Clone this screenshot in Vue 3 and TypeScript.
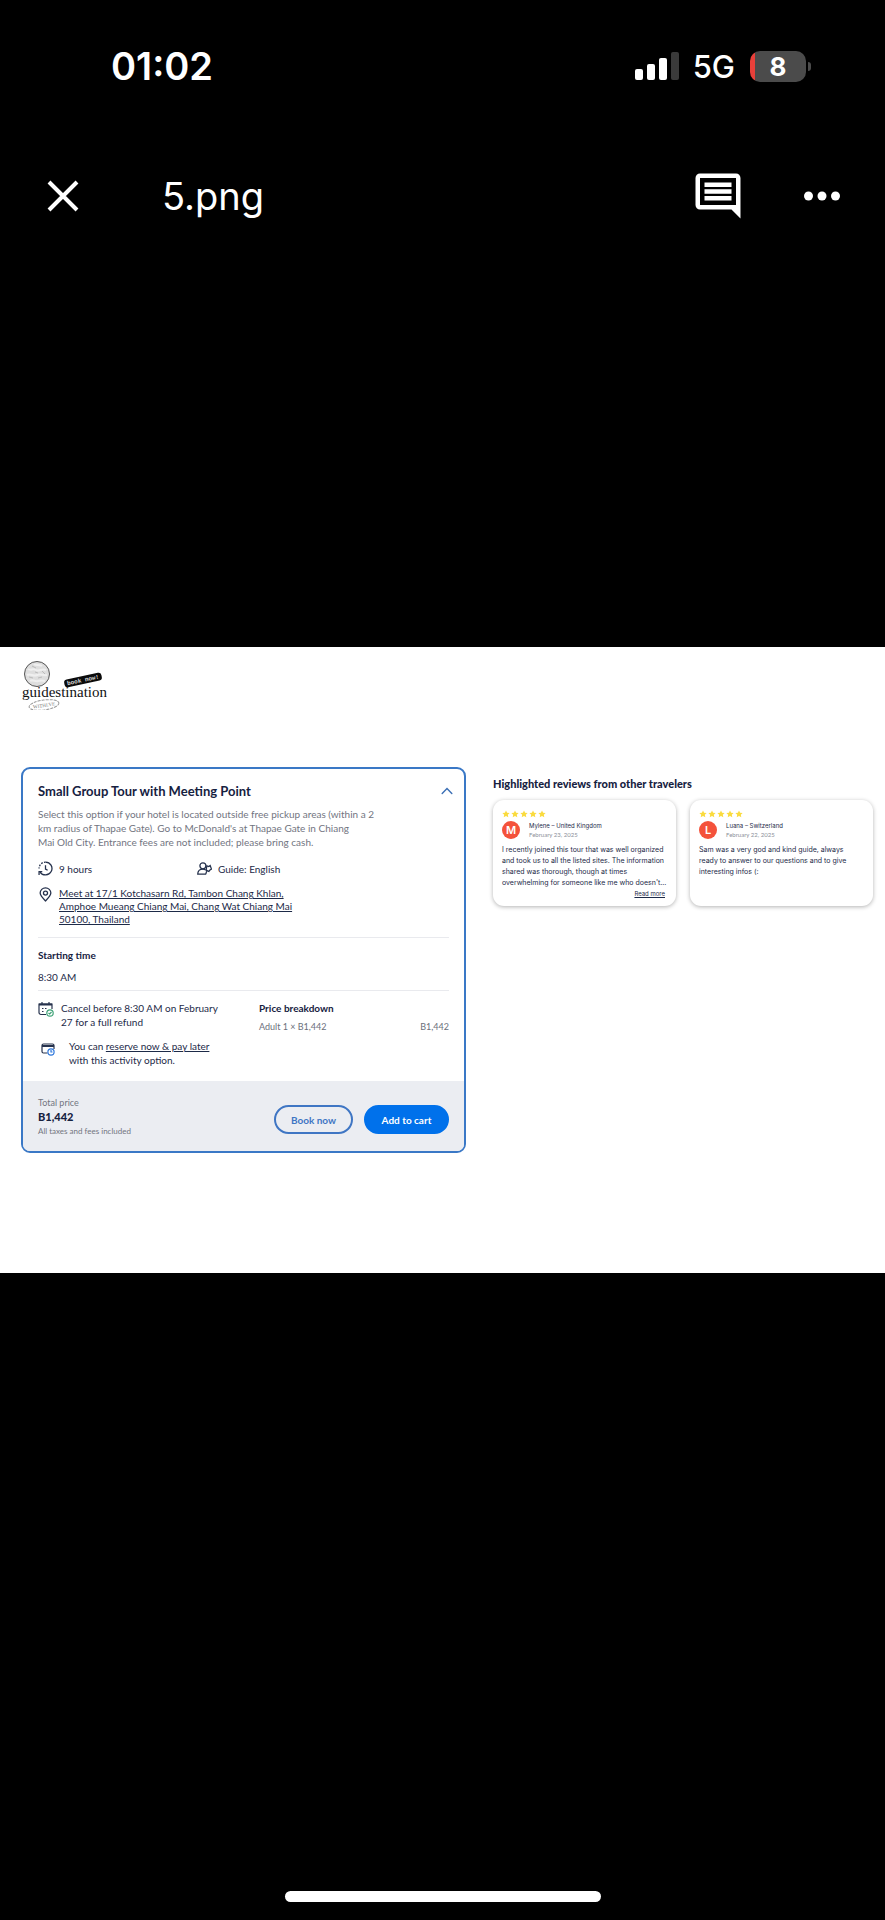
<script setup lang="ts">
interface Review {
  initial: string
  author: string
  date: string
  lines: string[]
  more: boolean
}

const reviews: Review[] = [
  {
    initial: 'M',
    author: 'Mylene – United Kingdom',
    date: 'February 23, 2025',
    lines: [
      'I recently joined this tour that was well organized',
      'and took us to all the listed sites. The information',
      'shared was thorough, though at times',
      "overwhelming for someone like me who doesn't...",
    ],
    more: true,
  },
  {
    initial: 'L',
    author: 'Luana – Switzerland',
    date: 'February 22, 2025',
    lines: [
      'Sam was a very god and kind guide, always',
      'ready to answer to our questions and to give',
      'interesting infos (:',
    ],
    more: false,
  },
]

const description: string[] = [
  'Select this option if your hotel is located outside free pickup areas (within a 2',
  "km radius of Thapae Gate). Go to McDonald's at Thapae Gate in Chiang",
  'Mai Old City. Entrance fees are not included; please bring cash.',
]

const address: string[] = [
  'Meet at 17/1 Kotchasarn Rd, Tambon Chang Khlan,',
  'Amphoe Mueang Chiang Mai, Chang Wat Chiang Mai',
  '50100, Thailand',
]
</script>

<template>
  <div class="viewer">
    <div class="status">
      <span class="clock">01:02</span>
      <div class="indicators">
        <svg class="signal" viewBox="0 0 44 28" aria-hidden="true">
          <rect x="0" y="17" width="8" height="11" rx="2" fill="#fff" />
          <rect x="12" y="12" width="8" height="16" rx="2" fill="#fff" />
          <rect x="24" y="6" width="8" height="22" rx="2" fill="#fff" />
          <rect x="36" y="0" width="8" height="28" rx="2" fill="#3a3a3a" />
        </svg>
        <span class="network">5G</span>
        <div class="battery"><span>8</span></div>
      </div>
    </div>

    <header class="bar">
      <button class="icon-button close" type="button" aria-label="Close">
        <svg viewBox="0 0 32 32"><path d="M2 2L30 30M30 2L2 30" stroke="#fff" stroke-width="4" /></svg>
      </button>
      <h1 class="filename">5.png</h1>
      <button class="icon-button comment" type="button" aria-label="Comments">
        <svg viewBox="0 0 24 24">
          <path fill="#fff" d="M21.99 4c0-1.1-.89-2-1.99-2H4c-1.1 0-2 .9-2 2v12c0 1.100.9 2 2 2h14l4 4-.01-18zM20 16H4V4h16v12zM6 12h12v2H6v-2zm0-3h12v2H6V9zm0-3h12v2H6V6z" />
        </svg>
      </button>
      <button class="icon-button dots" type="button" aria-label="More">
        <svg viewBox="0 0 36 10">
          <circle cx="4.500" cy="5" r="4.500" fill="#fff" /><circle cx="18" cy="5" r="4.500" fill="#fff" /><circle cx="31.500" cy="5" r="4.500" fill="#fff" />
        </svg>
      </button>
    </header>

    <main class="photo">
      <svg class="logo" viewBox="0 0 90 56" role="img" aria-label="guidestination">
        <circle cx="16" cy="20" r="12.500" fill="#dedede" stroke="#555" stroke-width="1" />
        <path d="M7 15c3 2 5-1 8 1s6-2 10 0M6 21c4-2 6 2 10 0s6 1 10 0M9 27c3-2 5 1 8 0s4-1 7 0M13 10c2 2 5 0 8 2" fill="none" stroke="#efefef" stroke-width="2" />
        <path d="M11 12l4 2M21 17l3 3M8 23l4 1M17 24l4-1M14 18l3 1" stroke="#bbb" />
        <g transform="rotate(-12 62 26)">
          <rect x="43" y="22" width="38" height="8" rx="3" fill="#0b0b0b" />
          <text x="62" y="28" text-anchor="middle" class="logo-tag">book now!</text>
        </g>
        <text x="1" y="43" class="logo-name">guidestination</text>
        <g transform="rotate(-8 23 51)">
          <ellipse cx="23" cy="51" rx="15" ry="5" fill="none" stroke="#999" stroke-width="1" stroke-dasharray="3 1" />
          <text x="23" y="53" text-anchor="middle" class="logo-sub">WITHLVE</text>
        </g>
      </svg>

      <div class="columns">
        <section class="tour">
          <div class="tour-body">
            <div class="tour-head">
              <h2>Small Group Tour with Meeting Point</h2>
              <button class="icon-button chevron" type="button" aria-label="Collapse">
                <svg viewBox="0 0 10 6"><path d="M1 5L5 1L9 5" fill="none" stroke="#3b6fb5" stroke-width="1.200" stroke-linecap="round" /></svg>
              </button>
            </div>
            <p class="description">
              <span v-for="line in description" :key="line" class="line">{{ line }}</span>
            </p>
            <div class="facts">
              <div class="fact">
                <svg viewBox="0 0 14 14" fill="none" stroke="#26324d" stroke-width="1.200">
                  <path d="M7 1a6 6 0 1 1-5 9.300" /><path d="M7 1a6 6 0 0 0-6 6" stroke-dasharray="1.500 1.200" />
                  <path d="M7 4v3.500l2 1.200M1 13v-3h3" />
                </svg>
                <span>9 hours</span>
              </div>
              <div class="fact">
                <svg viewBox="0 0 14 14" fill="none" stroke="#26324d" stroke-width="1.200">
                  <circle cx="5.500" cy="4.500" r="2.800" /><path d="M8.500 12.200H.7c0-3 1.800-4.700 4.800-4.700.9 0 1.700.2 2.300.6M8.200 12.200l1.200-4M9.200 4.600l1.800.6 1.300-.9 1.200 3.200-1.600 1-.8 1.200-2.600-1z" />
                </svg>
                <span>Guide: English</span>
              </div>
            </div>
            <div class="meeting">
              <svg viewBox="0 0 14 14" fill="none" stroke="#26324d" stroke-width="1.200">
                <path d="M7 13C4 10 2 8 2 5.700a5 4.900 0 0 1 10 0C12 8 10 10 7 13z" /><circle cx="7" cy="5.700" r="1.900" />
              </svg>
              <a href="#map"><span v-for="line in address" :key="line" class="line">{{ line }}</span></a>
            </div>
            <div class="start">
              <h3>Starting time</h3>
              <p>8:30 AM</p>
            </div>
            <div class="terms">
              <div class="policies">
                <div class="policy">
                  <svg viewBox="0 0 16 16" fill="none" stroke="#26324d" stroke-width="1.200">
                    <path d="M8 13.500H3a2 2 0 0 1-2-2V3h13v5" /><path d="M1 3.500h13" stroke-width="2.200" /><path d="M4 1v3M11 1v3" /><path d="M4 7.500h1.500M7 7.500h1.500M4 10.500h1.500" />
                    <circle cx="12" cy="12" r="3.200" fill="#fff" stroke="#3fa277" /><path d="M10.500 12l1.200 1 1.800-2" stroke="#3fa277" />
                  </svg>
                  <p><span class="line">Cancel before 8:30 AM on February</span><span class="line">27 for a full refund</span></p>
                </div>
                <div class="policy later">
                  <svg viewBox="0 0 14 14" fill="none" stroke="#26324d" stroke-width="1.200">
                    <path d="M6.500 11H2.500A1.500 1.500 0 0 1 1 9.500v-6A1.500 1.500 0 0 1 2.500 2h9A1.500 1.500 0 0 1 13 3.500V7" /><path d="M1 4h12" stroke-width="1.800" />
                    <circle cx="10" cy="10" r="3.100" fill="#fff" stroke="#2f78dc" /><path d="M10 8v2h1.500" stroke="#2f78dc" />
                  </svg>
                  <p><span class="line">You can <a href="#reserve">reserve now &amp; pay later</a></span><span class="line">with this activity option.</span></p>
                </div>
              </div>
              <div class="breakdown">
                <h3>Price breakdown</h3>
                <p><span>Adult 1 × B1,442</span><span>B1,442</span></p>
              </div>
            </div>
          </div>
          <footer class="total">
            <div class="sum">
              <span class="caption">Total price</span>
              <strong>B1,442</strong>
              <span class="note">All taxes and fees included</span>
            </div>
            <button class="action outline" type="button">Book now</button>
            <button class="action solid" type="button">Add to cart</button>
          </footer>
        </section>

        <section class="reviews">
          <h2>Highlighted reviews from other travelers</h2>
          <div class="review-list">
            <article v-for="review in reviews" :key="review.author" class="review">
              <svg class="stars" viewBox="0 0 44 8" role="img" aria-label="5 stars">
                <path v-for="n in 5" :key="n" :transform="`translate(${(n - 1) * 9} 0)`" d="M4 .5l1.100 2.300 2.500.3-1.800 1.700.5 2.500L4 6.100 1.700 7.300l.5-2.500L.4 3.100l2.500-.3z" fill="#fadb3e" />
              </svg>
              <div class="person">
                <span class="avatar">{{ review.initial }}</span>
                <div class="who">
                  <span>{{ review.author }}</span>
                  <span class="date">{{ review.date }}</span>
                </div>
              </div>
              <p><span v-for="line in review.lines" :key="line" class="line">{{ line }}</span></p>
              <a v-if="review.more" href="#review">Read more</a>
            </article>
          </div>
        </section>
      </div>
    </main>

    <div class="home"></div>
  </div>
</template>

<style>
body {
  margin: 0;
  background: #000;
}
</style>

<style scoped>
.viewer {
  display: flex;
  flex-direction: column;
  min-height: 100vh;
  background: #000;
  color: #fff;
  font-family: Inter, "Liberation Sans", sans-serif;
}
h1, h2, h3, p {
  margin: 0;
}
svg {
  display: block;
  flex: none;
}
.line {
  display: block;
  white-space: nowrap;
}
.icon-button {
  flex: none;
  padding: 0;
  border: 0;
  background: none;
}
.status {
  display: flex;
  justify-content: space-between;
  align-items: center;
  padding: 42px 74px 0 111px;
  height: 48px;
}
.clock {
  font-size: 38px;
  font-weight: 600;
}
.indicators {
  display: flex;
  align-items: center;
}
.signal {
  width: 44px;
  height: 28px;
}
.network {
  margin: 0 15px 0 14px;
  font-size: 31px;
  font-weight: 500;
}
.battery {
  position: relative;
  width: 56px;
  height: 31px;
  margin-right: 5px;
  border-radius: 10px;
  background: linear-gradient(90deg, #e8403a 5px, #4b4b4b 5px);
  font-size: 26px;
  font-weight: 700;
  line-height: 31px;
  text-align: center;
}
.battery::after {
  content: "";
  position: absolute;
  top: 11px;
  right: -5px;
  width: 3px;
  height: 9px;
  border-radius: 0 4px 4px 0;
  background: #4b4b4b;
}
.bar {
  display: flex;
  align-items: center;
  margin-top: 76px;
  padding: 0 45px 0 47px;
  height: 60px;
}
.close svg {
  width: 32px;
  height: 32px;
}
.filename {
  flex: 1;
  margin-left: 83px;
  font-size: 38px;
  font-weight: 400;
}
.comment svg {
  width: 54px;
  height: 54px;
}
.dots {
  margin-left: 59px;
}
.dots svg {
  width: 36px;
  height: 10px;
}
.photo {
  box-sizing: border-box;
  margin-top: 421px;
  padding: 7px 12px 120px 21px;
  background: #fff;
  color: #1d2a48;
  font-family: Lato, "Noto Sans", sans-serif;
  font-size: 10px;
}
.logo {
  width: 90px;
  height: 56px;
}
.logo-name {
  fill: #111;
  font-family: "Liberation Serif", serif;
  font-size: 15px;
}
.logo-tag {
  fill: #ddd;
  font-family: "Liberation Mono", monospace;
  font-size: 6px;
  font-weight: 700;
}
.logo-sub {
  fill: #777;
  font-family: "Liberation Serif", serif;
  font-size: 5px;
}
.columns {
  display: grid;
  grid-template-columns: 445fr 380fr;
  gap: 27px;
  margin-top: 57px;
}
.tour {
  overflow: hidden;
  border: 2px solid #3a78c6;
  border-radius: 9px;
}
.tour-body {
  padding: 13px 15px 14px;
}
.tour-head {
  display: flex;
  justify-content: space-between;
  align-items: center;
  height: 18px;
}
h2 {
  color: #16213f;
  font-size: 13px;
  font-weight: 700;
}
.chevron {
  margin-right: -4px;
}
.chevron svg {
  width: 12px;
  height: 8px;
}
.description {
  margin-top: 7px;
  color: #72757f;
  line-height: 14px;
}
.facts {
  display: grid;
  grid-template-columns: 159px 1fr;
  margin-top: 12px;
}
.fact {
  display: flex;
  align-items: center;
  gap: 6px;
}
.fact svg,
.meeting svg {
  width: 15px;
  height: 15px;
}
.meeting {
  display: flex;
  align-items: flex-start;
  gap: 6px;
  margin-top: 11px;
  line-height: 13px;
}
a {
  color: inherit;
  text-decoration: underline;
}
.start {
  margin-top: 11px;
  padding: 10px 0 6px;
  border-top: 1px solid #e9eaee;
  border-bottom: 1px solid #e9eaee;
  line-height: 14px;
}
.start p {
  margin-top: 8px;
}
h3 {
  color: #16213f;
  font-size: 10px;
  font-weight: 700;
}
.terms {
  display: grid;
  grid-template-columns: 221px 1fr;
  padding-top: 10px;
  line-height: 14px;
}
.policy {
  display: flex;
  gap: 7px;
}
.policy svg {
  width: 16px;
  height: 16px;
}
.later {
  gap: 14px;
  margin-top: 10px;
  padding-left: 3px;
}
.later svg {
  width: 14px;
  height: 14px;
  margin-top: 3px;
}
.breakdown p {
  display: flex;
  justify-content: space-between;
  margin-top: 5px;
  color: #6b6f7b;
  font-size: 9px;
}
.total {
  display: flex;
  align-items: flex-end;
  gap: 11px;
  padding: 15px 15px 13px;
  background: #ebedf2;
}
.sum {
  display: flex;
  flex: 1;
  flex-direction: column;
  line-height: 14px;
}
.sum strong {
  color: #16213f;
  font-size: 11px;
  font-weight: 900;
}
.caption {
  color: #72757f;
  font-size: 9px;
}
.note {
  color: #72757f;
  font-size: 8px;
}
.action {
  height: 29px;
  margin-bottom: 4px;
  border: 2px solid #3f76c4;
  border-radius: 15px;
  background: transparent;
  color: #3f76c4;
  font: 700 10px Lato, sans-serif;
}
.outline {
  width: 79px;
}
.solid {
  width: 85px;
  border-color: #0071eb;
  background: #0071eb;
  color: #fff;
}
.reviews h2 {
  margin-top: 9px;
  font-size: 11px;
  font-weight: 900;
  line-height: 15px;
}
.review-list {
  display: grid;
  grid-template-columns: 1fr 1fr;
  gap: 14px;
  margin-top: 9px;
}
.review {
  display: flex;
  flex-direction: column;
  box-sizing: border-box;
  min-height: 106px;
  padding: 10px 9px 6px;
  border-radius: 11px;
  box-shadow: 0 1px 4px rgba(0, 0, 0, 0.3);
  font-family: Inter, "Noto Sans", sans-serif;
  font-size: 7px;
  line-height: 11px;
}
.stars {
  width: 44px;
  height: 8px;
}
.person {
  display: flex;
  align-items: center;
  gap: 9px;
  margin-top: 3px;
}
.avatar {
  width: 18px;
  height: 18px;
  border-radius: 50%;
  background: #f4523b;
  color: #fff;
  font-size: 11px;
  font-weight: 600;
  line-height: 18px;
  text-align: center;
}
.who {
  display: flex;
  flex-direction: column;
  font-family: Lato, "Noto Sans", sans-serif;
  font-size: 6px;
  line-height: 9px;
}
.who span:first-child {
  font-family: Inter, "Noto Sans", sans-serif;
}
.date {
  color: #8c8f99;
}
.review p {
  margin-top: 5px;
}
.review a {
  align-self: flex-end;
  margin-right: 2px;
  font-size: 6px;
}
.home {
  width: 316px;
  height: 11px;
  margin: auto auto 18px;
  border-radius: 6px;
  background: #fff;
}
</style>
